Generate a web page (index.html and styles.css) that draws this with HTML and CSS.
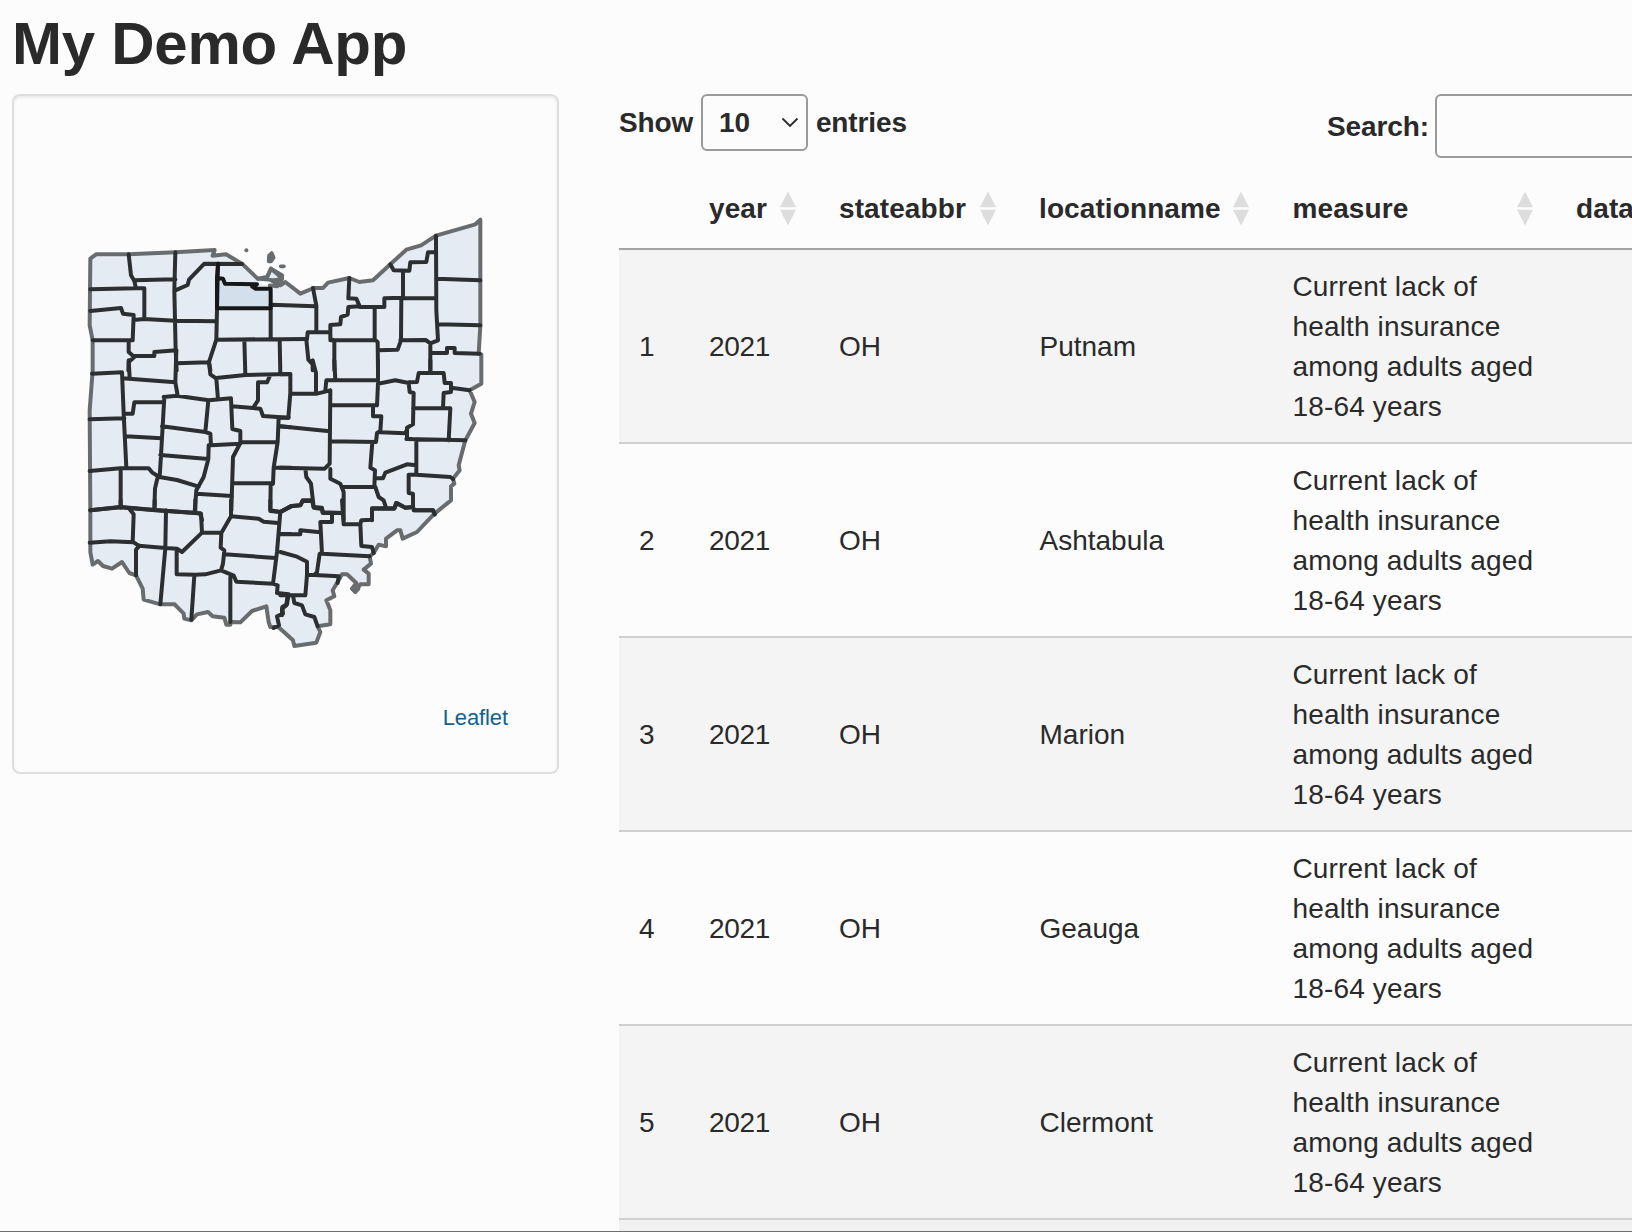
FILE: index.html
```html
<!DOCTYPE html>
<html lang="en">
<head>
<meta charset="utf-8">
<title>My Demo App</title>
<link rel="stylesheet" href="styles.css">
</head>
<body>
<h2 class="title">My Demo App</h2>
<main class="layout">
  <aside class="well">
    <svg class="map" viewBox="-22 -22 1257 1356" aria-label="Ohio counties">
      <path class="state" d="M30,145L47,132 145,132 285,126 403,119 397,136 437,132 485,160 532,205 560,200 572,175 590,190 605,205 575,212 600,225 615,215 660,250 700,233 728,233 743,217 807,203 837,215 878,210 930,162 978,118 1022,105 1067,76 1185,42 1200,28 1200,345 1195,430 1203,432 1203,520 1168,540 1183,575 1172,610 1183,638 1155,690 1135,765 1138,780 1118,805 1122,820 1112,828 1112,870 1060,912 1010,965 967,985 960,960 950,960 917,985 917,1008 895,1003 880,1028 868,1038 872,1060 850,1078 865,1090 865,1122 840,1122 825,1145 815,1135 828,1118 800,1092 785,1092 775,1110 757,1140 762,1158 738,1170 750,1200 750,1242 712,1248 720,1265 708,1297 642,1307 638,1290 600,1255 592,1250 570,1250 565,1235 558,1188 515,1202 480,1236 450,1235 450,1243 438,1243 432,1222 397,1218 383,1205 350,1212 333,1230 312,1225 310,1210 283,1182 240,1182 190,1168 187,1135 167,1095 147,1088 125,1055 95,1075 68,1067 53,1052 37,1063 30,1025 30,900 28,600 37,480 37,390 28,345Z"/>
      <path class="bay" d="M536,214L566,212 580,224 560,226 540,221Z"/>
      <path class="island solid" d="M566,136L574,128 580,142 572,153 565,153Z"/>
      <path class="island" d="M601,168H611M532,205L603,212 606,195 572,175 560,202M568,225L590,228 606,218M816,1135L826,1126 834,1136 826,1144Z"/>
      <circle class="islet" cx="498" cy="120" r="6"/>
      <path class="selected" d="M410,203H428L434,220 510,223 520,233H571V294H410Z"/>
      <g class="county">
        <path d="M145,132L152,195 162,212 167,234H192V325M162,210L285,207M30,237L167,234M30,302L122,293 128,310 160,314 157,390H37M160,329L192,326 285,331 408,333M285,126L282,240 286,420 289,480M285,240L322,224 326,208 372,160 485,161M413,160L408,388 386,455 390,480M408,388L680,386M571,294V387M571,283L705,288M145,390V425L162,440 145,455 144,480M162,437H222V425L288,420M289,459L386,456M492,388L495,494M598,388L600,490"/>
      </g>
      <g class="county" transform="translate(600 0)">
        <path d="M98,233L108,286V365M207,203L204,264 228,265 238,288 204,290 202,313 182,320 180,342 150,344V386L162,390V480M80,386L82,366H150M78,388L84,448 97,462V480M238,290H282M282,290H312V264L365,262M283,290V388L292,395 293,480M292,420L352,418 362,390 363,262 368,262V184M330,162L340,180 387,181 390,156 438,155 443,126H467M467,76L468,300 473,390 450,399 436,389 360,390M150,390H283M368,264H468M467,205L600,210M473,342L600,345M450,399V480M450,428H500V413H523V428L598,430"/>
      </g>
      <g class="county" transform="translate(0 450)">
        <path d="M35,40L125,36 130,160 138,322M145,0L148,52M126,54L285,66M288,-30L285,66 292,106M386,5L390,42 408,55 413,117M408,53L495,44 630,41M570,44L560,66H533V120L518,143M250,110L290,106 385,120 452,114 456,206 480,212V248L458,290 453,450M252,110L242,285 238,350M132,160H157L162,126H250M28,177L132,174M136,228L243,234M245,198L375,215 384,120M375,215L390,220 392,255 480,250M240,284L384,296 385,255M384,296L370,350 348,390 343,455M28,332L120,324H205L215,336 237,350 290,359 355,379M121,324V440M232,350L224,385 222,450M348,400L455,407M455,138L540,145 548,167 625,172M595,172L592,245 580,322 578,370 571,375 570,450 600,455 630,440M480,246H592M580,322H632M457,369H578M30,450L120,441 225,450 360,459 365,480M595,198L630,201"/>
      </g>
      <g class="county" transform="translate(600 450)">
        <path d="M0,42H30V98L24,172H0M32,100H110L150,90M97,0L107,38V100M162,0L165,60M135,90L138,60H293V0M150,90L148,310 133,325 0,322M150,134L290,135 293,70 345,60 385,68 388,95 400,98 398,192 380,202V234L408,238M0,198L148,213M278,135V168H303L300,212 290,218 287,245 150,243M300,216L375,219 382,202M385,66L410,65 415,38H490L493,68H512V95L490,98 488,143M450,0V38M512,82L568,90M398,144H510L505,240M378,236L555,240M408,238V340M276,245L270,322 284,330 282,380 185,380M287,354H308L315,337 380,312 408,315M150,326V355L180,370 190,395V480M75,325L78,350 92,370 100,440 125,442 127,456 190,458M0,455L32,437 60,435 67,420H95M285,380L295,410 310,420 318,445 275,445V480M318,445H342L347,428 375,442 398,440V400L385,398V343H408L510,350 518,356M400,450H458L463,462"/>
      </g>
      <g class="county" transform="translate(0 870)">
        <path d="M28,127L90,123 160,126 175,136 255,143 290,145 305,155 365,97 362,40 345,38M30,30L120,20 225,29 345,38M121,0V22M223,0V28M345,0V36M147,25L160,42 157,126M257,30L255,143 240,312M178,136L167,148V225M289,145V222L345,223 375,222 422,210 428,190 432,150 421,142 423,98 452,48V0M365,97H422M452,48L535,55 550,64 593,68M570,0V32L600,35 590,155 578,250M432,162L585,173M422,210L460,226 468,244 578,250 592,255 590,278 625,282 620,312 606,320 608,340 590,348 596,375 580,383M342,225L333,358M450,230V365M597,101H630"/>
      </g>
      <g class="county" transform="translate(600 870)">
        <path d="M0,35L32,18 60,15 67,2H95M95,0L100,22 125,26 127,38 187,38M155,38V65H120L125,160 268,168M0,102H60V90L120,96M185,0L190,72H240L243,60 275,58V24H342L350,8 375,22 398,20 402,30H458L463,42M240,72L243,137 275,140 280,158M118,160L110,215 102,224 175,228 172,248M0,155L50,169 80,184V224L75,285H0M80,224H102M22,283L18,315 5,325V345M38,285L42,308 65,315 75,342 102,350 112,378"/>
      </g>
      <path class="selected-line" d="M413,160L410,203 428,205 434,220 530,222 515,228 525,235 571,235V294H410V203"/>
    </svg>
    <a class="credit">Leaflet</a>
  </aside>
  <section class="data">
    <div class="controls">
      <label class="length">Show <span class="select">10<svg class="chevron" viewBox="0 0 18 12"><path d="M1.500 1.500L9 9l7.500-7.500"/></svg></span> entries</label>
      <label class="search">Search:<span class="input"></span></label>
    </div>
    <table class="grid">
      <colgroup><col class="c-id"><col class="c-year"><col class="c-state"><col class="c-name"><col class="c-measure"><col class="c-value"></colgroup>
      <thead><tr>
        <th></th>
        <th><div class="head">year<i class="sort"></i></div></th>
        <th><div class="head">stateabbr<i class="sort"></i></div></th>
        <th><div class="head">locationname<i class="sort"></i></div></th>
        <th><div class="head">measure<i class="sort"></i></div></th>
        <th><div class="head">data_value</div></th>
      </tr></thead>
      <tbody>
        <tr><td>1</td><td>2021</td><td>OH</td><td>Putnam</td><td>Current lack of<br>health insurance<br>among adults aged<br>18-64 years</td><td></td></tr>
        <tr><td>2</td><td>2021</td><td>OH</td><td>Ashtabula</td><td>Current lack of<br>health insurance<br>among adults aged<br>18-64 years</td><td></td></tr>
        <tr><td>3</td><td>2021</td><td>OH</td><td>Marion</td><td>Current lack of<br>health insurance<br>among adults aged<br>18-64 years</td><td></td></tr>
        <tr><td>4</td><td>2021</td><td>OH</td><td>Geauga</td><td>Current lack of<br>health insurance<br>among adults aged<br>18-64 years</td><td></td></tr>
        <tr><td>5</td><td>2021</td><td>OH</td><td>Clermont</td><td>Current lack of<br>health insurance<br>among adults aged<br>18-64 years</td><td></td></tr>
        <tr class="next"><td></td><td></td><td></td><td></td><td></td><td></td></tr>
      </tbody>
    </table>
  </section>
</main>
</body>
</html>
```

FILE: styles.css
```css
* { box-sizing: border-box; }
body {
  margin: 0;
  height: 1232px;
  overflow: hidden;
  background: #fcfcfc;
  border-bottom: 1px solid #6e6e6e;
  color: #2a2a2a;
  font: 28px/40px "Liberation Sans", Arial, sans-serif;
}
.title {
  margin: 0;
  height: 94px;
  padding: 10px 0 0 12px;
  font-size: 60px;
  line-height: 68px;
  font-weight: 700;
  letter-spacing: -.25px;
}
.layout {
  display: grid;
  grid-template-columns: 547px 1013px;
  column-gap: 60px;
  align-items: start;
  height: 1137px;
  padding-left: 12px;
  overflow: hidden;
}
.well {
  display: flex;
  flex-direction: column;
  height: 680px;
  padding: 107px 0 0 59px;
  border: 2px solid #dedede;
  border-radius: 8px;
  box-shadow: inset 0 2px 3px rgba(0, 0, 0, .07);
}
.map { display: block; width: 419px; height: 452px; flex: none; }
.state { fill: #e4ebf3; stroke: #696c6e; stroke-width: 12; stroke-linejoin: round; }
.county { fill: none; stroke: #2b2f31; stroke-width: 12; stroke-linejoin: round; stroke-linecap: round; }
.bay { fill: #fcfcfc; }
.island { fill: none; stroke: #696c6e; stroke-width: 11; stroke-linejoin: round; stroke-linecap: round; }
.island.solid { fill: #696c6e; }
.islet { fill: #696c6e; }
.selected { fill: #d3e0ec; }
.selected-line { fill: none; stroke: #151719; stroke-width: 12; stroke-linejoin: round; stroke-linecap: round; }
.credit {
  align-self: flex-end;
  margin: 49px 49px 0 0;
  color: #11628f;
  font-size: 22px;
  line-height: 28px;
  letter-spacing: -.1px;
}
.data { overflow: hidden; }
.controls {
  display: flex;
  justify-content: space-between;
  width: 1137px;
  height: 80px;
  font-weight: 700;
}
.length, .search { display: flex; align-items: flex-start; }
.length { height: 57px; gap: 8px; line-height: 58px; letter-spacing: -.1px; }
.search { height: 64px; width: 429px; gap: 6px; line-height: 65px; letter-spacing: -.1px; }
.select {
  display: flex;
  align-items: center;
  justify-content: space-between;
  width: 107px;
  height: 57px;
  margin-left: -.4px;
  padding: 0 7px 0 16px;
  border: 2px solid #9a9a9a;
  border-radius: 6px;
  letter-spacing: 0;
}
.chevron { width: 18px; height: 12px; fill: none; stroke: #2a2a2a; stroke-width: 1.8; }
.input { flex: 1; height: 64px; border: 2px solid #9a9a9a; border-radius: 6px; }
.grid { width: 1137px; table-layout: fixed; border-collapse: separate; border-spacing: 0; }
.c-id { width: 70px; }
.c-year { width: 130px; }
.c-state { width: 200px; }
.c-name { width: 253px; }
.c-measure { width: 284px; }
.c-value { width: 200px; }
th { height: 76px; padding: 0 23px 5px 20px; border-bottom: 2px solid #a2a2a2; text-align: left; letter-spacing: .1px; }
.head { display: flex; align-items: center; justify-content: space-between; }
.sort {
  width: 16px;
  height: 34px;
  background: #dddddd;
  clip-path: polygon(50% 0, 100% 46%, 0 46%, 0 54%, 100% 54%, 50% 100%, 0 54%, 0 46%);
}
td { height: 194px; padding: 17px 20px 15px; border-bottom: 2px solid #cfcfcf; white-space: nowrap; }
td:nth-child(2) { letter-spacing: -.3px; }
td:nth-child(4) { padding-left: 20.500px; }
td:nth-child(5) { padding-left: 20.500px; letter-spacing: .15px; }
th:nth-child(5) { padding-left: 20.500px; }
tbody tr:nth-child(odd) { background: #f4f4f4; }
tbody .next { background: #f1f1f1; }
```
